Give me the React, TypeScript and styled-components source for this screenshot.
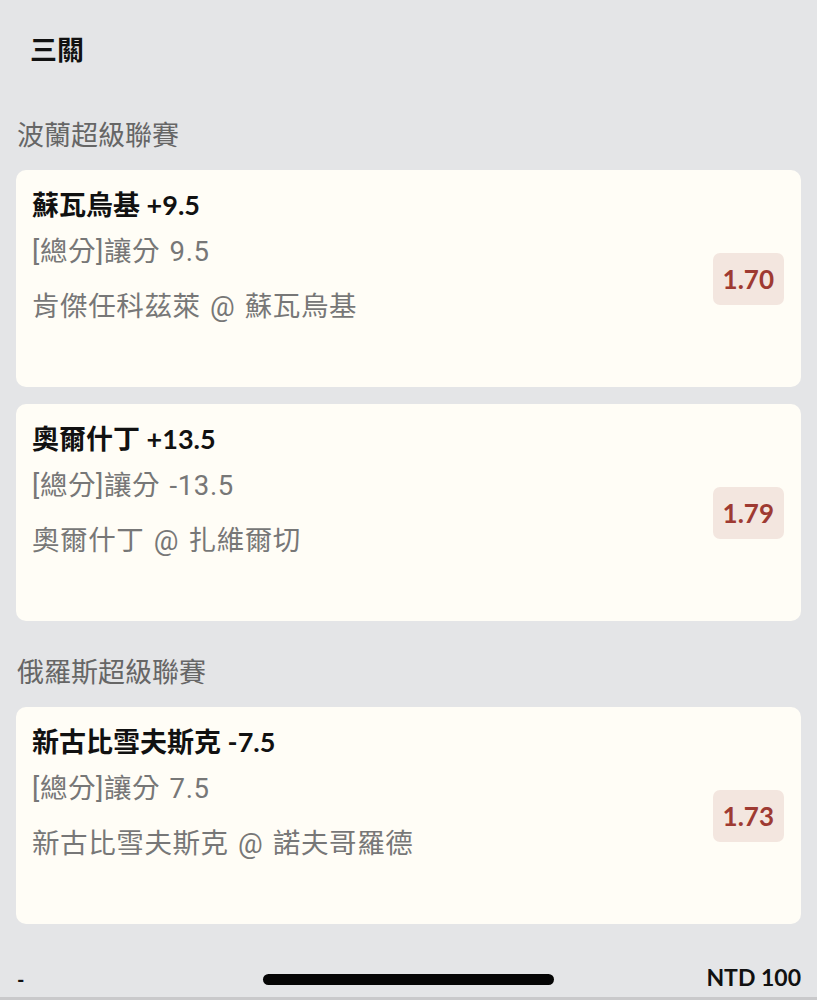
import React from "react";
import styled, { createGlobalStyle } from "styled-components";

const Global = createGlobalStyle`
  html, body { margin: 0; padding: 0; background: #e4e5e7; }
  body { font-family: "Noto Sans", "Noto Sans CJK TC", sans-serif; }
  * { box-sizing: border-box; }
`;

const Page = styled.div`
  width: 817px;
  min-height: 1000px;
  background: #e4e5e7;
  padding: 32px 16px 0 16px;
  display: flex;
  flex-direction: column;
`;

const Title = styled.div`
  font-family: "Lato", "Noto Sans CJK TC", sans-serif;
  font-weight: 700;
  font-size: 27px;
  line-height: 36px;
  height: 36px;
  color: #111;
  padding-left: 14px;
`;

const League = styled.div<{ $top: number }>`
  font-family: "Noto Sans", "Noto Sans CJK TC", sans-serif;
  font-size: 27px;
  line-height: 38px;
  color: #666;
  margin-top: ${(p) => p.$top}px;
  margin-bottom: 16px;
  padding-left: 1px;
`;

const Card = styled.div`
  background: #fffdf6;
  border-radius: 10px;
  padding: 17px 16px 61px 16px;
  display: flex;
  align-items: center;
  justify-content: space-between;
  margin-bottom: 17px;
  &:last-child { margin-bottom: 0; }
`;

const CardBody = styled.div`
  display: flex;
  flex-direction: column;
`;

const CardTitle = styled.div`
  font-family: "Lato", "Noto Sans CJK TC", sans-serif;
  font-weight: 700;
  font-size: 27px;
  line-height: 36px;
  color: #111;
`;

const SubLine = styled.div<{ $gap: number }>`
  font-family: "Roboto", "Noto Sans CJK TC", sans-serif;
  font-size: 27.5px;
  line-height: 38px;
  color: #777;
  margin-top: ${(p) => p.$gap}px;
  letter-spacing: 0.6px;
  word-spacing: 2px;
`;

const Odds = styled.div`
  font-family: "Lato", sans-serif;
  font-weight: 700;
  font-size: 26px;
  color: #9e3a32;
  background: #f3e6df;
  border-radius: 7px;
  height: 52px;
  min-width: 69px;
  padding: 0 10px;
  display: flex;
  align-items: center;
  justify-content: center;
  margin-top: 44px;
  margin-right: 1px;
`;

const Group = styled.div`
  display: flex;
  flex-direction: column;
`;

const Footer = styled.div`
  margin: auto -16px 0 -16px;
  padding: 38px 16px 4px 16px;
  border-bottom: 3px solid #c9c9cb;
`;

const FooterRow = styled.div`
  display: grid;
  grid-template-columns: 1fr auto 1fr;
  align-items: center;
  height: 30px;
`;

const Dash = styled.div`
  font-family: "Lato", sans-serif;
  font-weight: 700;
  font-size: 20px;
  color: #111;
  padding-left: 1px;
  margin-top: 2px;
`;

const HomeBar = styled.div`
  width: 291px;
  height: 11px;
  border-radius: 6px;
  background: #050505;
  margin-top: 2px;
`;

const Amount = styled.div`
  font-family: "Lato", sans-serif;
  font-weight: 700;
  font-size: 23px;
  color: #111;
  text-align: right;
  margin-top: -2px;
`;

type Bet = { title: string; market: string; match: string; odds: string };

const groups: { league: string; top: number; bets: Bet[] }[] = [
  {
    league: "波蘭超級聯賽",
    top: 48,
    bets: [
      { title: "蘇瓦烏基 +9.5", market: "[總分]讓分 9.5", match: "肯傑任科茲萊 @ 蘇瓦烏基", odds: "1.70" },
      { title: "奧爾什丁 +13.5", market: "[總分]讓分 -13.5", match: "奧爾什丁 @ 扎維爾切", odds: "1.79" },
    ],
  },
  {
    league: "俄羅斯超級聯賽",
    top: 32,
    bets: [
      { title: "新古比雪夫斯克 -7.5", market: "[總分]讓分 7.5", match: "新古比雪夫斯克 @ 諾夫哥羅德", odds: "1.73" },
    ],
  },
];

export default function App() {
  return (
    <>
      <Global />
      <Page>
        <Title>三關</Title>
        {groups.map((g) => (
          <React.Fragment key={g.league}>
            <League $top={g.top}>{g.league}</League>
            <Group>
              {g.bets.map((b) => (
                <Card key={b.title}>
                  <CardBody>
                    <CardTitle>{b.title}</CardTitle>
                    <SubLine $gap={10}>{b.market}</SubLine>
                    <SubLine $gap={17}>{b.match}</SubLine>
                  </CardBody>
                  <Odds>{b.odds}</Odds>
                </Card>
              ))}
            </Group>
          </React.Fragment>
        ))}
        <Footer>
          <FooterRow>
            <Dash>-</Dash>
            <HomeBar />
            <Amount>NTD 100</Amount>
          </FooterRow>
        </Footer>
      </Page>
    </>
  );
}
